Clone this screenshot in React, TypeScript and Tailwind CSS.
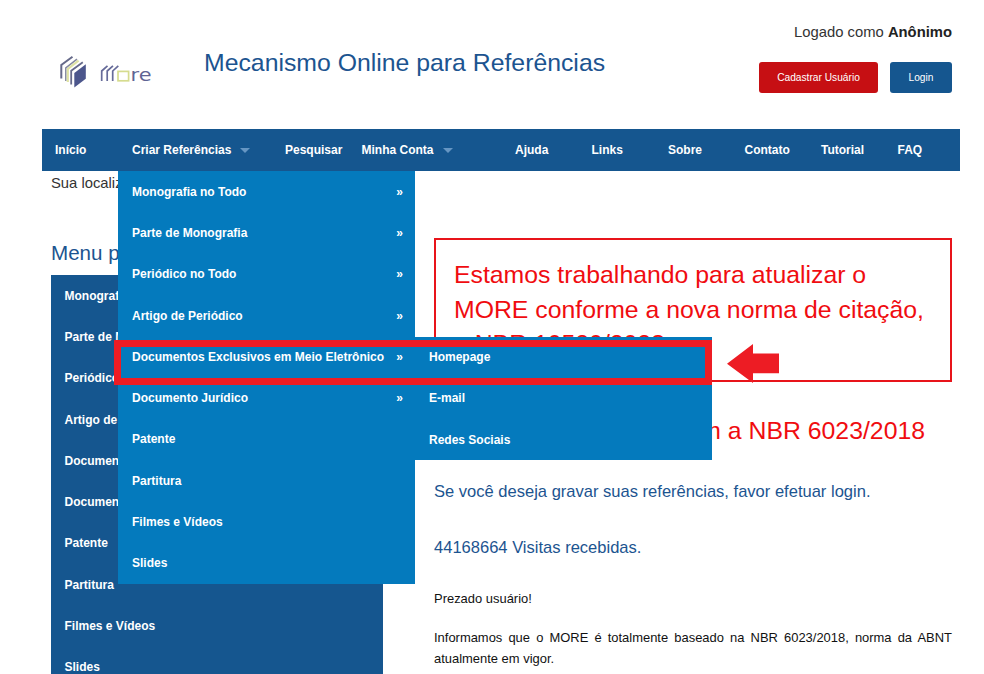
type Entry = { label: string; sub?: boolean };

const entries: Entry[] = [
  { label: "Monografia no Todo", sub: true },
  { label: "Parte de Monografia", sub: true },
  { label: "Periódico no Todo", sub: true },
  { label: "Artigo de Periódico", sub: true },
  { label: "Documentos Exclusivos em Meio Eletrônico", sub: true },
  { label: "Documento Jurídico", sub: true },
  { label: "Patente" },
  { label: "Partitura" },
  { label: "Filmes e Vídeos" },
  { label: "Slides" },
];

const electronic = ["Homepage", "E-mail", "Redes Sociais"];

function Logo() {
  return (
    <svg width="96" height="40" viewBox="58 52 96 40" fill="none" role="img" aria-label="more">
      <path d="M61.3 78.5V65L72.5 56.8" stroke="#666a8a" strokeWidth="2" />
      <path d="M65.8 81V67.8L77 59.2" stroke="#8488a0" strokeWidth="1.5" />
      <path d="M67.8 82V69L78.6 60.6" stroke="#dfe3a4" strokeWidth="2.2" />
      <path d="M71.2 84.5V70.8L82.8 62.2" stroke="#666a8a" strokeWidth="1.8" />
      <path d="M74.3 73L85.8 64.3V78.8L74.3 87.6Z" fill="#4c568c" />
      <g stroke="#666b99" strokeWidth="1.7">
        <path d="M101.7 81V71L107.5 65.8" />
        <path d="M107.2 81V71L113 65.8" />
        <path d="M112.7 81V71L118.3 65.8" />
      </g>
      <rect x="118" y="71.4" width="10.6" height="9.4" stroke="#d6dc8f" strokeWidth="1.7" />
      <text x="130.5" y="81.3" fontSize="17.5" textLength="21" lengthAdjust="spacingAndGlyphs" fill="#5f6494" fontFamily="'DejaVu Sans', sans-serif">
        re
      </text>
    </svg>
  );
}

function Caret() {
  return <span className="ml-[9px] border-x-5 border-t-5 border-x-transparent border-t-[#6696c3]" />;
}

function Dropdown() {
  return (
    <ul className="absolute top-full -left-px z-10 w-[297px] bg-[#047abd]">
      {entries.map((e, i) => (
        <li key={e.label} className="relative flex h-[41.3px] items-center justify-between pr-[11.5px] pl-[14.5px]">
          <span>{e.label}</span>
          {e.sub && <span>»</span>}
          {i === 4 && (
            <ul className="absolute top-[0.4px] left-full w-[297px] bg-[#047abd]">
              {electronic.map((s) => (
                <li key={s} className="flex h-[41.2px] items-center pl-[14.5px]">
                  {s}
                </li>
              ))}
            </ul>
          )}
        </li>
      ))}
    </ul>
  );
}

export default function App() {
  return (
    <div className="relative h-[674px] w-[984px] overflow-hidden bg-white font-['Liberation_Sans',Arial,sans-serif] text-[14.8px] text-[#333]">
      <header className="flex h-[129px] items-start pr-[32px] pl-[58px]">
        <div className="mt-[52px] w-[146px]">
          <Logo />
        </div>
        <h1 className="mt-[46px] grow text-[24.8px] leading-[34px] whitespace-nowrap text-[#1c5490]">
          Mecanismo Online para Referências
        </h1>
        <div className="mt-[22px] flex flex-col items-end">
          <p className="leading-[21px] whitespace-nowrap">
            Logado como <b className="text-[#222]">Anônimo</b>
          </p>
          <div className="mt-[19px] flex gap-[12px] text-[10.2px] text-white">
            <button className="h-[31px] w-[119px] rounded-[3px] bg-[#c60f13]">Cadastrar Usuário</button>
            <button className="h-[31px] w-[62px] rounded-[3px] bg-[#15568f]">Login</button>
          </div>
        </div>
      </header>

      <nav className="mr-[24px] ml-[42px] grid h-[42px] grid-cols-12 bg-[#15568f] text-[12px] font-bold whitespace-nowrap text-white">
        <div className="flex items-center pl-[13px]">Início</div>
        <div className="relative col-span-2 flex items-center pl-[13.5px]">
          Criar Referências
          <Caret />
          <Dropdown />
        </div>
        <div className="flex items-center pl-[13.5px]">Pesquisar</div>
        <div className="col-span-2 flex items-center pl-[13.5px]">
          Minha Conta
          <Caret />
        </div>
        {["Ajuda", "Links", "Sobre", "Contato", "Tutorial", "FAQ"].map((t) => (
          <div key={t} className="flex items-center pl-[14px]">
            {t}
          </div>
        ))}
      </nav>

      <div className="flex pr-[32px] pl-[51px]">
        <aside className="w-[332px] shrink-0">
          <p className="pt-[2px] leading-[21px]">Sua localização: Início</p>
          <h2 className="mt-[44px] h-[37px] text-[20.6px] leading-[30px] text-[#1c5490]">Menu principal</h2>
          <ul className="bg-[#15568f] text-[12px] font-bold text-white">
            {entries.map((e) => (
              <li key={e.label} className="flex h-[41.3px] items-center pl-[13.5px] whitespace-nowrap">
                {e.label}
              </li>
            ))}
          </ul>
        </aside>

        <main className="ml-[51px] w-[518px] shrink-0 pt-[67px]">
          <div className="h-[144px] border-2 border-[#e8141a] px-[18px] pt-[18px] text-[24.8px] leading-[34.7px] whitespace-nowrap text-[#f00c10]">
            Estamos trabalhando para atualizar o<br />
            MORE conforme a nova norma de citação,
            <br />a NBR 10520/2023.
          </div>
          <p className="mt-[31px] pr-[27px] text-right text-[24.8px] leading-[35px] text-[#f00c10]">
            De acordo com a NBR 6023/2018
          </p>
          <p className="mt-[32px] text-[16.55px] leading-[24px] whitespace-nowrap text-[#1c5490]">
            Se você deseja gravar suas referências, favor efetuar login.
          </p>
          <p className="mt-[32px] text-[16.55px] leading-[24px] text-[#1c5490]">44168664 Visitas recebidas.</p>
          <p className="mt-[28px] text-[12.95px] leading-[21px] text-[#111]">Prezado usuário!</p>
          <p className="mt-[18px] text-justify text-[12.95px] leading-[21px] text-[#111]">
            Informamos que o MORE é totalmente baseado na NBR 6023/2018, norma da ABNT atualmente em vigor.
          </p>
        </main>
      </div>

      {/* Highlight frame and pointer over the active menu row */}
      <div className="absolute top-[340px] left-[114px] z-20 h-[45px] w-[598px] border-[7px] border-[#ed1c24]" />
      <svg className="absolute top-[343px] left-[726px] z-20" width="54" height="41" viewBox="726 343 54 41">
        <path d="M727 363.8L753 344V353.5H779V373.3H753V383Z" fill="#ed1c24" />
      </svg>
    </div>
  );
}
